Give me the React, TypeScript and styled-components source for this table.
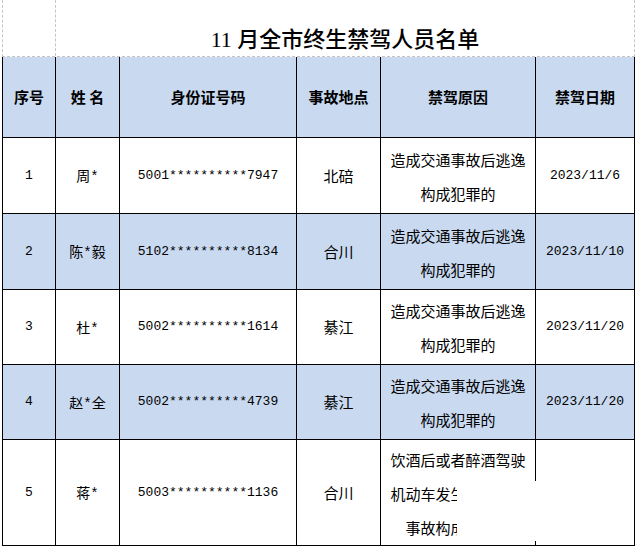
import React from "react";
import styled, { createGlobalStyle } from "styled-components";

const Global = createGlobalStyle`
  html, body { margin: 0; padding: 0; background: #ffffff; }
  body { font-family: "Noto Sans CJK SC", sans-serif; color: #000; }
`;

const Page = styled.div`
  width: 639px;
  height: 546px;
  padding-left: 2px;
  box-sizing: border-box;
  overflow: hidden;
`;

const TitleRow = styled.div`
  display: grid;
  grid-template-columns: 53px 1fr;
  width: 633px;
  height: 57px;
  box-sizing: border-box;
  border-left: 1px dashed #c4c4c4;
  border-right: 1px dashed #c4c4c4;
  border-bottom: 1px dashed #c4c4c4;
`;

const TitleSpacer = styled.div`
  border-right: 1px dashed #c4c4c4;
`;

const Title = styled.h1`
  margin: 0;
  display: flex;
  align-items: flex-end;
  justify-content: center;
  padding-bottom: 5px;
  font-family: "Liberation Serif", "Noto Sans CJK SC", serif;
  font-size: 22px;
  line-height: 22px;
  font-weight: 500;
  color: #000;
`;

const TableWrap = styled.div`
  position: relative;
  width: 633px;
`;

const Table = styled.table`
  border-collapse: collapse;
  table-layout: fixed;
  width: 633px;
`;

const Col = styled.col<{ $w: number }>`
  width: ${(p) => p.$w}px;
`;

const HeadRow = styled.tr`
  height: 80px;
  background: #c8d9f0;
`;

const HeadCell = styled.th`
  border-left: 1px solid #000;
  border-right: 1px solid #000;
  border-bottom: 1px solid #000;
  border-top: none;
  padding: 0;
  font-family: "Noto Sans CJK SC", sans-serif;
  font-size: 15px;
  font-weight: 700;
  text-align: center;
  vertical-align: middle;
  white-space: pre;
`;

const BodyRow = styled.tr<{ $h: number; $shade: boolean }>`
  height: ${(p) => p.$h}px;
  background: ${(p) => (p.$shade ? "#c8d9f0" : "#ffffff")};
`;

const Cell = styled.td<{ $mono?: boolean }>`
  border: 1px solid #000;
  padding: 0;
  text-align: center;
  vertical-align: middle;
  font-family: ${(p) =>
    p.$mono
      ? `"Liberation Mono", "Noto Sans CJK SC", monospace`
      : `"Noto Sans CJK SC", sans-serif`};
  font-size: ${(p) => (p.$mono ? "13px" : "15px")};
  font-weight: 400;
  white-space: nowrap;
`;

const NameCell = styled(Cell)`
  font-family: "Liberation Mono", "Noto Sans CJK SC", monospace;
  font-size: 14px;
`;

const ReasonCell = styled(Cell)`
  position: relative;
  line-height: 34px;
  padding-top: 3px;
`;

const Line = styled.span`
  display: block;
`;

const Mask = styled.div`
  position: absolute;
  left: 76px;
  top: 41px;
  width: 177px;
  height: 60px;
  background: #ffffff;
  z-index: 2;
`;

type Row = {
  no: string;
  name: string;
  id: string;
  place: string;
  reason: string[];
  date: string;
  h: number;
  mask?: boolean;
};

const rows: Row[] = [
  { no: "1", name: "周*", id: "5001**********7947", place: "北碚", reason: ["造成交通事故后逃逸", "构成犯罪的"], date: "2023/11/6", h: 76 },
  { no: "2", name: "陈*毅", id: "5102**********8134", place: "合川", reason: ["造成交通事故后逃逸", "构成犯罪的"], date: "2023/11/10", h: 76 },
  { no: "3", name: "杜*", id: "5002**********1614", place: "綦江", reason: ["造成交通事故后逃逸", "构成犯罪的"], date: "2023/11/20", h: 75 },
  { no: "4", name: "赵*全", id: "5002**********4739", place: "綦江", reason: ["造成交通事故后逃逸", "构成犯罪的"], date: "2023/11/20", h: 75 },
  { no: "5", name: "蒋*", id: "5003**********1136", place: "合川", reason: ["饮酒后或者醉酒驾驶", "机动车发生重大交通", "事故构成犯罪的"], date: "", h: 104, mask: true },
];

const widths = [53, 64, 177, 84, 155, 99];
const heads = ["序号", "姓 名", "身份证号码", "事故地点", "禁驾原因", "禁驾日期"];

export default function App() {
  return (
    <Page>
      <Global />
      <TitleRow>
        <TitleSpacer />
        <Title>11 月全市终生禁驾人员名单</Title>
      </TitleRow>
      <TableWrap>
        <Table>
          <colgroup>
            {widths.map((w, i) => (
              <Col key={i} $w={w} />
            ))}
          </colgroup>
          <thead>
            <HeadRow>
              {heads.map((h) => (
                <HeadCell key={h}>{h}</HeadCell>
              ))}
            </HeadRow>
          </thead>
          <tbody>
            {rows.map((r, i) => (
              <BodyRow key={r.no} $h={r.h} $shade={i % 2 === 1}>
                <Cell $mono>{r.no}</Cell>
                <NameCell>{r.name}</NameCell>
                <Cell $mono>{r.id}</Cell>
                <Cell>{r.place}</Cell>
                <ReasonCell>
                  {r.reason.map((l) => (
                    <Line key={l}>{l}</Line>
                  ))}
                  {r.mask && <Mask />}
                </ReasonCell>
                <Cell $mono>{r.date}</Cell>
              </BodyRow>
            ))}
          </tbody>
        </Table>
      </TableWrap>
    </Page>
  );
}
